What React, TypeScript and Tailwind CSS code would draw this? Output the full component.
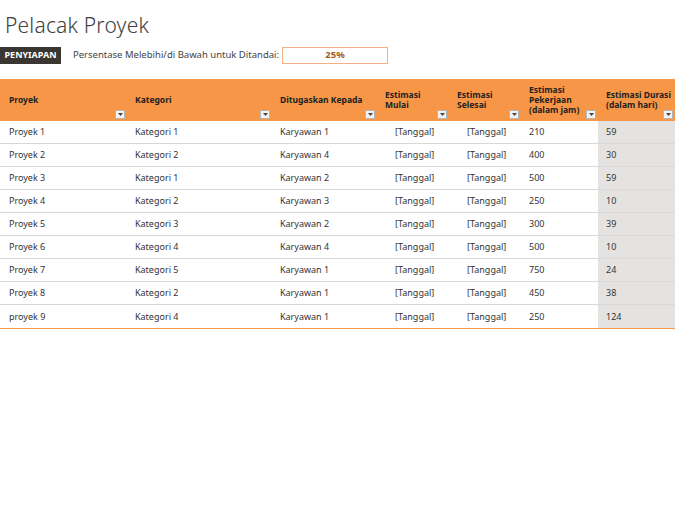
const cols = [
  { h: ["Proyek"], w: "w-[127px]", pl: "pl-[9px]" },
  { h: ["Kategori"], w: "w-[145px]", pl: "pl-[8px]" },
  { h: ["Ditugaskan Kepada"], w: "w-[105px]", pl: "pl-[8px]" },
  { h: ["Estimasi", "Mulai"], w: "w-[72px]", pl: "pl-[8px]" },
  { h: ["Estimasi", "Selesai"], w: "w-[72px]", pl: "pl-[8px]" },
  { h: ["Estimasi", "Pekerjaan", "(dalam jam)"], w: "w-[77px]", pl: "pl-[8px]" },
  { h: ["Estimasi Durasi", "(dalam hari)"], w: "w-[77px]", pl: "pl-[8px]" },
]

const rows = [
  ["Proyek 1", "Kategori 1", "Karyawan 1", "210", "59"],
  ["Proyek 2", "Kategori 2", "Karyawan 4", "400", "30"],
  ["Proyek 3", "Kategori 1", "Karyawan 2", "500", "59"],
  ["Proyek 4", "Kategori 2", "Karyawan 3", "250", "10"],
  ["Proyek 5", "Kategori 3", "Karyawan 2", "300", "39"],
  ["Proyek 6", "Kategori 4", "Karyawan 4", "500", "10"],
  ["Proyek 7", "Kategori 5", "Karyawan 1", "750", "24"],
  ["Proyek 8", "Kategori 2", "Karyawan 1", "450", "38"],
  ["proyek 9", "Kategori 4", "Karyawan 1", "250", "124"],
]

function Drop() {
  return (
    <span className="absolute right-[2px] bottom-[2px] w-[10px] h-[9px] bg-[#f3f3f3] border border-[#b5b5b5] flex items-center justify-center">
      <svg width="5" height="3" viewBox="0 0 5 3"><path d="M0 0h5L2.5 3z" fill="#444" /></svg>
    </span>
  )
}

export default function App() {
  return (
    <div className="w-[675px] h-[520px] bg-white text-[#333] font-['Lato','Liberation_Sans',sans-serif]">
      <h1 className="pl-[5px] pt-[10px] h-[44px] text-[21px] font-light text-[#404040] tracking-[0.2px]">Pelacak Proyek</h1>
      <div className="flex items-center h-[22px]">
        <div className="ml-0 w-[61px] h-[17px] bg-[#3a3632] text-white text-[9px] font-bold flex items-center justify-center">PENYIAPAN</div>
        <span className="ml-[12px] text-[9.5px] text-[#444]">Persentase Melebihi/di Bawah untuk Ditandai:</span>
        <div className="ml-[3px] w-[106px] h-[17px] border border-[#f4b183] text-[9.5px] font-bold text-[#a65a1c] flex items-center justify-center">25%</div>
      </div>
      <div className="mt-[13px]">
        <div className="flex h-[42px] bg-[#f79646]">
          {cols.map((c, i) => (
            <div key={i} className={`relative ${c.w} ${c.pl} flex flex-col justify-center text-[8.5px] font-bold text-[#222] leading-[10px]`}>
              {c.h.map((t) => <span key={t}>{t}</span>)}
              <Drop />
            </div>
          ))}
        </div>
        <div className="border-b border-[#f79646]">
          {rows.map((r, i) => {
            const vals = [r[0], r[1], r[2], "[Tanggal]", "[Tanggal]", r[3], r[4]]
            return (
              <div key={i} className={`flex h-[23px] text-[9px] text-[#333] ${i < rows.length - 1 ? "border-b border-[#d9d9d9]" : ""}`}>
                {vals.map((v, j) => (
                  <div key={j} className={`${cols[j].w} flex items-center ${j === 3 || j === 4 ? "pl-[18px]" : cols[j].pl} ${j === 6 ? "bg-[#e4e3e2]" : ""}`}>{v}</div>
                ))}
              </div>
            )
          })}
        </div>
      </div>
    </div>
  )
}
